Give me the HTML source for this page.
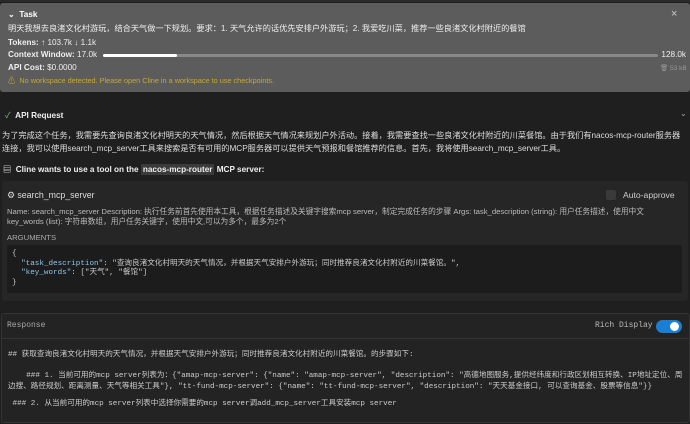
<html><head><style>
body{margin:0;width:690px;height:424px;background:#1f1f1f;font-family:"Liberation Sans","Noto Sans CJK SC",sans-serif;color:#d4d4d4;font-size:8.2px;position:relative;overflow:hidden}
.a{position:absolute;white-space:nowrap}
.mono{font-family:"Liberation Mono","Noto Sans CJK SC",monospace}
</style></head><body>
<div class="a" style="left:0;top:0;width:690px;height:2px;background:#2a2a2a"></div>
<div class="a" style="left:0;top:3px;width:690px;height:89px;background:#5c5c5c;border-radius:3px"></div>
<div class="a" style="left:8px;top:9px;color:#fff;font-weight:bold">⌄&nbsp;&nbsp;Task</div>
<div class="a" style="left:671px;top:8px;color:#ccc;font-size:11px">×</div>
<div class="a" style="left:8px;top:22px;color:#eee">明天我想去良渚文化村游玩，结合天气做一下规划。要求：1. 天气允许的话优先安排户外游玩；2. 我爱吃川菜，推荐一些良渚文化村附近的餐馆</div>
<div class="a" style="left:8px;top:38px;color:#eee"><b>Tokens:</b> ↑ 103.7k ↓ 1.1k</div>
<div class="a" style="left:8px;top:50px;color:#eee"><b>Context Window:</b> 17.0k</div>
<div class="a" style="left:103px;top:54px;width:555px;height:3px;background:#888;border-radius:2px"></div>
<div class="a" style="left:103px;top:54px;width:74px;height:3px;background:#fff;border-radius:2px"></div>
<div class="a" style="right:4px;top:50px;color:#eee">128.0k</div>
<div class="a" style="left:8px;top:63px;color:#eee"><b>API Cost:</b> $0.0000</div>
<div class="a" style="left:660px;top:64px;color:#999;font-size:6.5px">🗑 53 kB</div>
<div class="a" style="left:8px;top:76px;color:#c9a92a;font-size:7.3px">⚠&nbsp;&nbsp;No workspace detected. Please open Cline in a workspace to use checkpoints.</div>

<div class="a" style="left:5px;top:109px;color:#eee"><span style="color:#7fc47f">✓</span>&nbsp;&nbsp;<b>API Request</b></div>
<div class="a" style="left:680px;top:108px;color:#aaa">⌄</div>
<div class="a" style="left:2px;top:129px;color:#ddd;line-height:13px;font-size:8.2px">为了完成这个任务，我需要先查询良渚文化村明天的天气情况，然后根据天气情况来规划户外活动。接着，我需要查找一些良渚文化村附近的川菜餐馆。由于我们有nacos-mcp-router服务器<br>连接，我可以使用search_mcp_server工具来搜索是否有可用的MCP服务器可以提供天气预报和餐馆推荐的信息。首先，我将使用search_mcp_server工具。</div>
<div class="a" style="left:3px;top:163px;color:#eee;font-weight:bold">▤&nbsp;&nbsp;Cline wants to use a tool on the <span style="background:#3a3a3a;padding:1px 2px;font-weight:bold">nacos-mcp-router</span> MCP server:</div>

<div class="a" style="left:2px;top:181px;width:686px;height:120px;background:#262626;border-radius:3px"></div>
<div class="a" style="left:7px;top:190px;color:#ddd;font-size:8.8px">⚙ search_mcp_server</div>
<div class="a" style="left:606px;top:190px;width:10px;height:10px;background:#3a3a3a;border-radius:2px"></div>
<div class="a" style="left:623px;top:190px;color:#ccc;font-size:8.6px">Auto-approve</div>
<div class="a" style="left:7px;top:207px;color:#bbb;font-size:7.7px;line-height:10px">Name: search_mcp_server Description: 执行任务前首先使用本工具，根据任务描述及关键字搜索mcp server，制定完成任务的步骤 Args: task_description (string): 用户任务描述，使用中文<br>key_words (list): 字符串数组，用户任务关键字，使用中文,可以为多个，最多为2个</div>
<div class="a" style="left:7px;top:233px;color:#aaa;font-size:7.7px">ARGUMENTS</div>
<div class="a" style="left:7px;top:245px;width:675px;height:48px;background:#1c1c1c;border-radius:2px"></div>
<div class="a mono" style="left:12px;top:250px;font-size:7.6px;line-height:9.5px;color:#ccc">{<br>&nbsp;&nbsp;<span style="color:#8fc5e8">"task_description"</span>: "查询良渚文化村明天的天气情况，并根据天气安排户外游玩；同时推荐良渚文化村附近的川菜餐馆。",<br>&nbsp;&nbsp;<span style="color:#8fc5e8">"key_words"</span>: ["天气", "餐馆"]<br>}</div>

<div class="a" style="left:1px;top:313px;width:687px;height:108px;background:#232323;border:1px solid #333;border-radius:3px"></div>
<div class="a" style="left:1px;top:338px;width:689px;height:1px;background:#333"></div>
<div class="a mono" style="left:7px;top:321px;color:#aaa;font-size:8px">Response</div>
<div class="a mono" style="left:595px;top:321px;color:#bbb;font-size:8px">Rich Display</div>
<div class="a" style="left:656px;top:320px;width:26px;height:13px;background:#1a7fd4;border-radius:7px"></div>
<div class="a" style="left:670px;top:322px;width:9px;height:9px;background:#fff;border-radius:50%"></div>
<div class="a mono" style="left:8px;top:350px;color:#ccc;font-size:7.6px;line-height:11px">## 获取查询良渚文化村明天的天气情况，并根据天气安排户外游玩；同时推荐良渚文化村附近的川菜餐馆。的步骤如下:</div>
<div class="a mono" style="left:8px;top:371px;color:#ccc;font-size:7.6px;line-height:11px">&nbsp;&nbsp;&nbsp;&nbsp;### 1. 当前可用的mcp server列表为：{"amap-mcp-server": {"name": "amap-mcp-server", "description": "高德地图服务,提供经纬度和行政区划相互转换、IP地址定位、周<br>边搜、路径规划、距离测量、天气等相关工具"}, "tt-fund-mcp-server": {"name": "tt-fund-mcp-server", "description": "天天基金接口, 可以查询基金、股票等信息"}}</div>
<div class="a mono" style="left:8px;top:397px;color:#ccc;font-size:7.6px">&nbsp;### 2. 从当前可用的mcp server列表中选择你需要的mcp server调add_mcp_server工具安装mcp server</div>
</body></html>
